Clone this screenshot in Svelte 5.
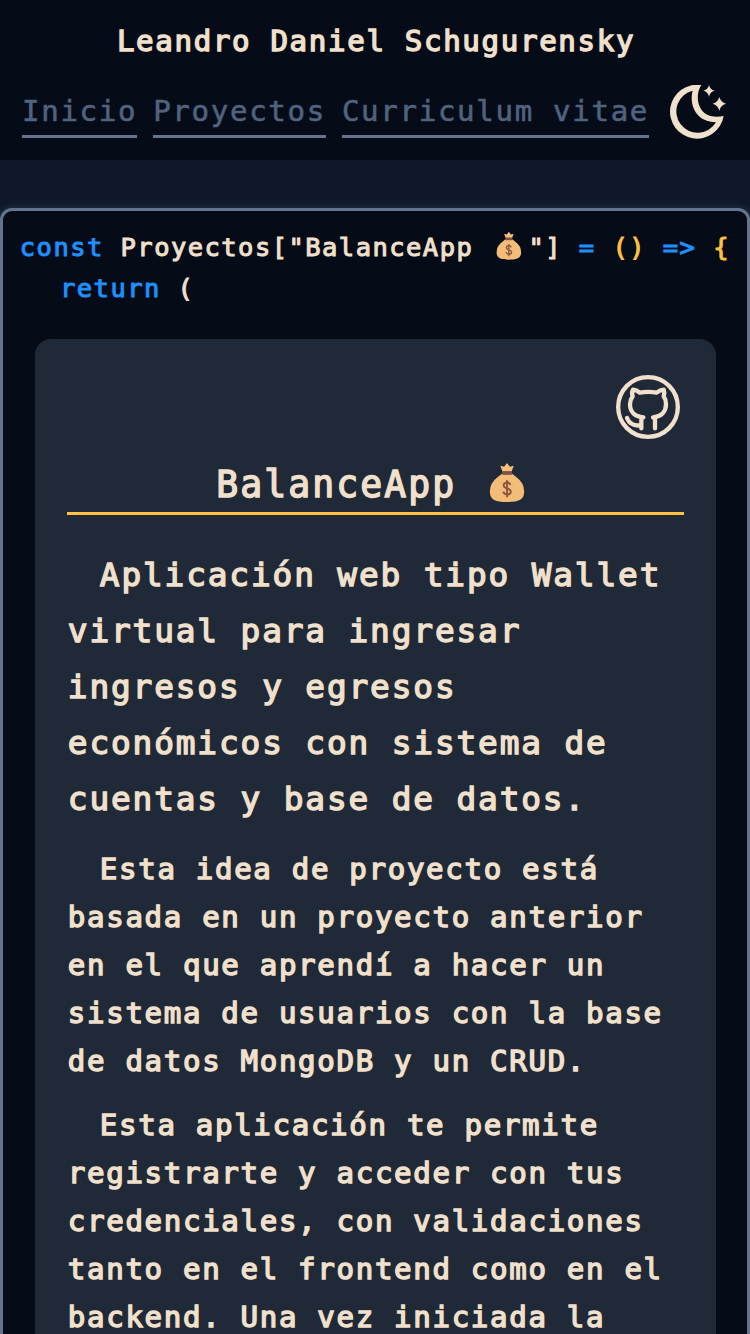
<script>
  const links = ['Inicio', 'Proyectos', 'Curriculum vitae'];
  const paragraphs = [
    'Esta idea de proyecto está basada en un proyecto anterior en el que aprendí a hacer un sistema de usuarios con la base de datos MongoDB y un CRUD.',
    'Esta aplicación te permite registrarte y acceder con tus credenciales, con validaciones tanto en el frontend como en el backend. Una vez iniciada la'
  ];
</script>

{#snippet bag()}
  <svg class="bag" viewBox="0 0 55 44" aria-hidden="true">
    <path d="M20 4l4 1 3-4 3 4 4-1-3 8h-8z" fill="#f6c17c" />
    <path d="M22 12h10l5 4q8 6 8 15c0 9-6 11-18 11s-18-2-18-11q0-9 8-15z" fill="#f3bd77" />
    <path d="M22 9.5h10v4H22z" fill="#84503f" />
    <path d="M30.5 24c-1-4-7-3-7 .5 0 4 7.500 2.500 7.500 6.500 0 4-7 4-8 0M27 19v18" fill="none" stroke="#8c5541" stroke-width="2" />
  </svg>
{/snippet}

<div class="page">
  <header>
    <h1>Leandro Daniel Schugurensky</h1>
    <nav>
      {#each links as link}
        <a href="#top">{link}</a>
      {/each}
      <svg class="moon" viewBox="45 30 168 162" aria-hidden="true">
        <path fill-rule="evenodd" d="M139 30C119 60 126 114 170 124C183 126 195 125 206 123A81 81 0 1 1 139 30ZM113 47C103 80 116 141 183 142A64 64 0 1 1 113 47Z" />
        <path d="M162 30Q165 44 179 47Q165 50 162 65Q159 50 145 47Q159 44 162 30ZM193 66Q197 82 213 86Q197 90 193 107Q189 90 173 86Q189 82 193 66Z" />
      </svg>
    </nav>
  </header>

  <main>
    <div class="code"><b>const</b> Proyectos["BalanceApp {@render bag()}"] <b>=</b> <i>()</i> <b>=&gt;</b> <i>&#123;</i></div>
    <div class="code nested"><b>return</b> (</div>
    <article>
      <svg class="github" viewBox="48 44 192 192" aria-hidden="true">
        <circle cx="144" cy="140" r="89.500" stroke-width="13" />
        <path stroke-width="13" d="M124 204V178Q124 174 130 171C103 169 90 153 90 132C90 122 93 115 98 108Q94 98 99 88Q110 89 119 97Q145 92 170 97Q180 89 191 88Q195 98 191 108C196 115 198 124 198 132C198 153 185 169 159 171Q165 174 165 180V204M81 173C87 188 98 198 122 195" />
      </svg>
      <h2>BalanceApp {@render bag()}</h2>
      <p class="lead">Aplicación web tipo Wallet virtual para ingresar ingresos y egresos económicos con sistema de cuentas y base de datos.</p>
      {#each paragraphs as text}
        <p>{text}</p>
      {/each}
    </article>
  </main>
</div>

<style>
  :global(body) { background: #0e182a; }
  .page {
    --k: 0.91;
    height: 1334px;
    overflow: hidden;
    display: flex;
    flex-direction: column;
    background: #0e182a;
    color: #f1e0cc;
    font-family: "DejaVu Sans Mono", monospace;
    font-weight: 400;
    -webkit-text-stroke: 1.400px currentColor;
  }
  h1, h2, p, a, .code { letter-spacing: 0.0573em; }
  h1, h2, p { margin: 0; font-weight: inherit; }
  header {
    flex: none;
    height: 160px;
    box-sizing: border-box;
    padding: 17px 22px 0;
    background: #050c18;
  }
  h1 { padding-left: 2px; font-size: calc(32px * var(--k)); line-height: 48px; text-align: center; white-space: nowrap; }
  nav { display: flex; gap: 16px; margin-top: 19px; white-space: nowrap; }
  a {
    height: 51px;
    border-bottom: 3px solid #64748f;
    color: #50637f;
    font-size: calc(32px * var(--k));
    line-height: 54px;
    text-decoration: none;
    -webkit-text-stroke-width: 0.600px;
  }
  .moon { flex: none; width: 56px; height: 54px; margin: 1px 0 0 5px; fill: #f1e0cc; }
  main {
    flex: none;
    box-sizing: border-box;
    height: 1300px;
    margin-top: 48px;
    padding: 16px;
    border: 3px solid #64748f;
    border-radius: 12px;
    background: #050c18;
    box-shadow: 0 0 8px #64748f55;
  }
  .code { padding-left: 0.800px; font-size: calc(28px * var(--k)); line-height: 41px; height: 41px; white-space: pre; -webkit-text-stroke-width: 1px; }
  .nested { padding-left: 41px; }
  b { color: #1e90ff; font-weight: inherit; }
  i { color: #ffc13f; font-style: normal; }
  .bag { display: inline-block; vertical-align: -5px; }
  .code .bag { width: 38.4px; height: 30px; }
  h2 .bag { width: 55px; height: 42px; vertical-align: -7px; }
  article {
    margin: 30px 15.500px 0 16px;
    padding: 32px;
    height: 1100px;
    border-radius: 16px;
    background: #202937;
  }
  .github { display: block; width: 64px; height: 64px; margin: 4px 4px 0 auto; fill: none; stroke: #f1e0cc; stroke-linecap: round; stroke-linejoin: round; }
  h2 {
    height: 73px;
    padding-left: 1px;
    margin-left: 0;
    border-bottom: 3px solid #ffc13f;
    font-size: calc(40px * var(--k));
    line-height: 91px;
    text-align: center;
    white-space: nowrap;
  }
  p { margin-top: 16px; padding-left: 0.800px; font-size: calc(32px * var(--k)); line-height: 48px; text-indent: 32px; }
  .lead { margin: 32px 0 18px; font-size: calc(36px * var(--k)); line-height: 56px; }
</style>
